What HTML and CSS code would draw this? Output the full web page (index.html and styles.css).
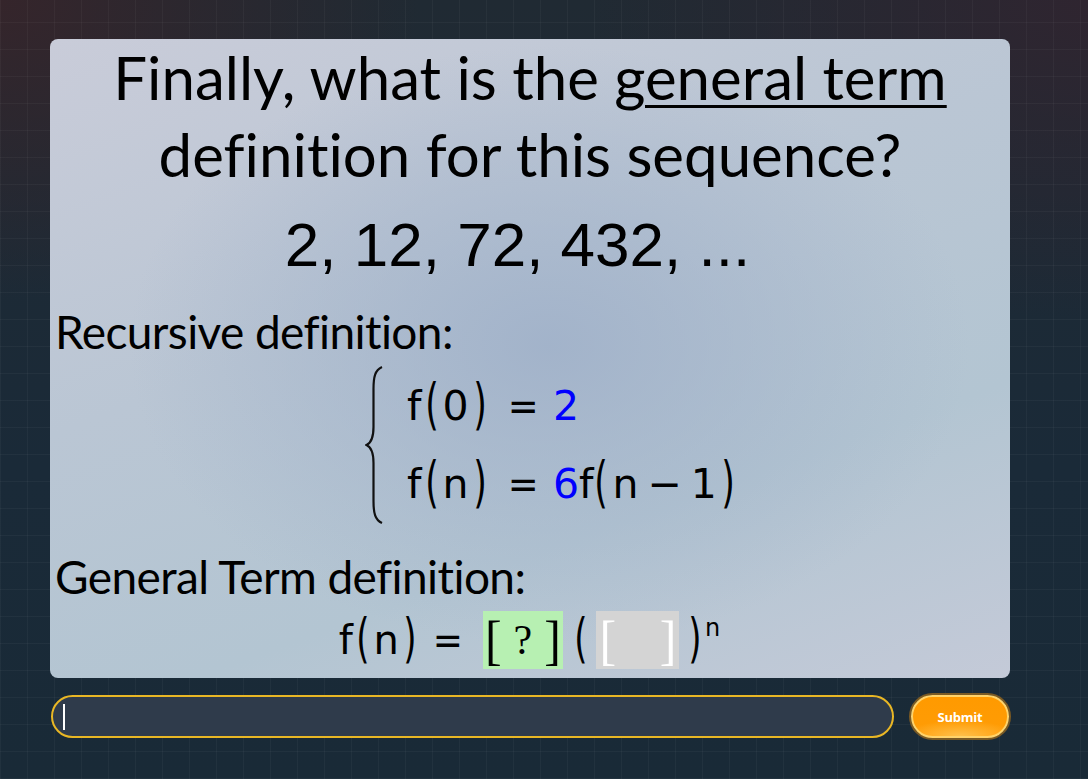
FILE: index.html
```html
<!DOCTYPE html>
<html>
<head>
<meta charset="utf-8">
<link rel="stylesheet" href="styles.css">
</head>
<body>
<div class="page">
  <div class="card">
    <h1 class="title">Finally, what is the <u class="ul">general term</u><br>definition for this sequence?</h1>
    <div class="seq">2, 12, 72, 432, ...</div>
    <div class="label">Recursive definition:</div>
    <div class="cases">
      <svg class="brace" width="20" height="160" viewBox="0 0 20 160">
        <path d="M17 2 C10 5 8.5 12 8.5 24 L8.5 62 C8.5 72 6 78 1.5 80 C6 82 8.5 88 8.5 98 L8.5 136 C8.5 148 10 155 17 158" fill="none" stroke="#111" stroke-width="2.2"/>
      </svg>
      <div class="rows">
        <div class="row"><span class="fn">f</span><span class="p">(</span><span class="v">0</span><span class="p">)</span><span class="eq">=</span><span class="blue">2</span></div>
        <div class="row"><span class="fn">f</span><span class="p">(</span><span class="v">n</span><span class="p">)</span><span class="eq">=</span><span class="blue">6</span><span class="fn2">f</span><span class="p">(</span><span class="v">n</span><span class="op">−</span><span class="v">1</span><span class="p">)</span></div>
      </div>
    </div>
    <div class="label label2">General Term definition:</div>
    <div class="formula">
      <span class="fn">f</span><span class="p">(</span><span class="v">n</span><span class="p">)</span><span class="eq">=</span>
      <span class="box green"><span class="br">[</span><span class="q">?</span><span class="br">]</span></span><span class="p p2">(</span><span class="box gray"><span class="br wb">[</span><span class="gap"></span><span class="br wb">]</span></span><span class="p p3">)</span><sup class="sup">n</sup>
    </div>
  </div>
  <div class="bar">
    <div class="input"><span class="caret"></span></div>
    <button class="submit">Submit</button>
  </div>
</div>
</body>
</html>
```
FILE: styles.css
```css
html, body {
  margin: 0;
  height: 100%;
}
body {
  width: 1088px;
  height: 779px;
  overflow: hidden;
  background-color: #1b2a36;
  background-image:
    repeating-linear-gradient(90deg, rgba(255,255,255,0.035) 0 1px, transparent 1px 27px),
    repeating-linear-gradient(0deg, rgba(255,255,255,0.035) 0 1px, transparent 1px 27px),
    radial-gradient(ellipse 420px 300px at 0% 0%, #35252b 0%, rgba(53,37,43,0) 100%),
    radial-gradient(ellipse 500px 320px at 100% 0%, #2f2530 0%, rgba(47,37,48,0) 100%),
    linear-gradient(180deg, #202a33 0%, #1a2a38 60%, #192a37 100%);
  font-family: Lato, "Open Sans", sans-serif;
  font-variant-ligatures: none;
}
.page {
  padding: 39px 78px 0 50px;
}
.card {
  height: 639px;
  box-sizing: border-box;
  border-radius: 8px;
  background:
    radial-gradient(ellipse 420px 300px at 52% 48%, rgba(160,177,201,0.9) 0%, rgba(160,177,201,0) 100%),
    linear-gradient(160deg, #c9ccd9 0%, #bac6d4 40%, #b3c5d2 70%, #c4cad8 100%);
  padding: 0 0 0 5px;
  color: #000;
}
.title {
  margin: 0;
  font-weight: 400;
  font-size: 60px;
  line-height: 77px;
  text-align: center;
  padding-right: 5px;
}
.ul {
  text-decoration: underline;
  text-decoration-thickness: 3px;
  text-underline-offset: 5px;
}
.seq {
  font-family: "Liberation Sans", Arial, sans-serif;
  font-size: 62px;
  line-height: 80px;
  text-align: center;
  margin-top: 12px;
  padding-right: 30px;
}
.label {
  font-size: 46px;
  letter-spacing: -0.6px;
  line-height: 56px;
  margin-top: 19px;
}
.cases {
  display: flex;
  justify-content: center;
  align-items: center;
  margin-left: 36px;
  margin-top: 5px;
}
.brace {
  display: block;
  margin-right: 22px;
}
.rows {
  display: flex;
  flex-direction: column;
  gap: 12px;
  font-family: "DejaVu Sans", sans-serif;
  font-size: 41px;
  line-height: 66px;
}
.row {
  display: flex;
  align-items: baseline;
}
.fn, .fn2, .v, .p, .eq, .op, .blue {
  display: inline-block;
}
.fn { margin-right: 2px; }
.fn2 { margin-right: 0; }
.p { transform: scaleY(1.35) scaleX(0.85); transform-origin: 50% 60%; }
.v { margin: 0 3px; }
.eq { margin: 0 13px 0 18px; transform: scaleX(0.9); }
.op { margin: 0 6px; }
.blue { color: #0000ff; }
.label2 {
  margin-top: 24px;
}
.formula {
  display: flex;
  justify-content: center;
  align-items: center;
  font-family: "DejaVu Sans", sans-serif;
  font-size: 40px;
  line-height: 58px;
  padding-right: 6px;
  margin-top: 6px;
}
.formula .eq { margin: 0 18px 0 14px; }
.box {
  display: inline-flex;
  align-items: center;
  justify-content: space-between;
  height: 58px;
  box-sizing: border-box;
  font-family: "Liberation Serif", "DejaVu Serif", serif;
}
.green {
  background: #b7f0b2;
  width: 80px;
  padding: 0 2px;
}
.gray {
  background: #d4d4d4;
  width: 83px;
  padding: 0 3px;
}
.br {
  font-size: 50px;
  line-height: 58px;
  transform: scaleY(1.1);
}
.wb { color: #fff; }
.q {
  font-size: 42px;
}
.p2 { margin: 0 8px 0 10px; }
.p3 { margin: 0 2px 0 8px; }
.sup {
  font-size: 24px;
  align-self: flex-start;
  line-height: 26px;
  margin-top: 4px;
}
.bar {
  display: flex;
  align-items: center;
  margin-top: 17px;
  gap: 17px;
}
.input {
  width: 843px;
  height: 43px;
  box-sizing: border-box;
  margin-left: 1px;
  border: 2px solid #e9b725;
  border-radius: 22px;
  background: #2f3b4b;
  display: flex;
  align-items: center;
  padding-left: 10px;
}
.caret {
  width: 2px;
  height: 26px;
  background: #fff;
}
.submit {
  width: 98px;
  height: 43px;
  border-radius: 22px;
  border: 2px solid #ffd36a;
  box-shadow: 0 0 0 2px #7b5a23;
  background: radial-gradient(ellipse 60% 40% at 50% 100%, #ffc04a 0%, rgba(255,192,74,0) 100%), linear-gradient(180deg, #ff9a00 0%, #ff9c06 100%);
  color: #fff;
  font-family: "Open Sans", sans-serif;
  font-weight: 700;
  font-size: 13px;
  letter-spacing: -0.2px;
  padding: 0;
}
```
